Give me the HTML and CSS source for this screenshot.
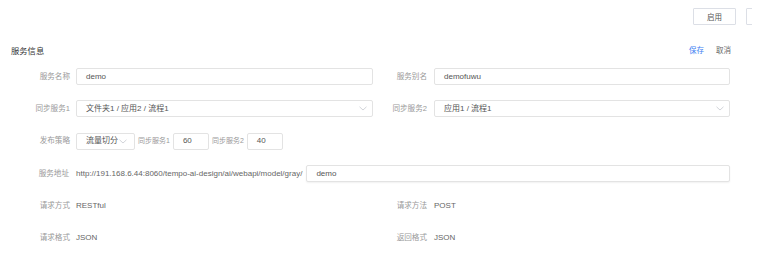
FILE: index.html
```html
<!DOCTYPE html>
<html lang="zh">
<head>
<meta charset="utf-8">
<link rel="stylesheet" href="styles.css">
</head>
<body>
<div class="page">
  <div class="topbar">
    <div class="toolbar">
      <button class="btn">启用</button>
      <button class="btn btn-clipped" aria-label="停用"></button>
    </div>
  </div>
  <div class="section-head">
    <span class="title">服务信息</span>
    <div class="actions">
      <span class="link primary">保存</span>
      <span class="link">取消</span>
    </div>
  </div>
  <div class="form">
    <div class="label">服务名称</div>
    <div class="input">demo</div>
    <div class="label">服务别名</div>
    <div class="input">demofuwu</div>

    <div class="label">同步服务1</div>
    <div class="input select"><span>文件夹1 / 应用2 / 流程1</span><svg class="chev" viewBox="0 0 8 5"><path d="M0.5 0.8 L4 4 L7.5 0.8"/></svg></div>
    <div class="label">同步服务2</div>
    <div class="input select"><span>应用1 / 流程1</span><svg class="chev" viewBox="0 0 8 5"><path d="M0.5 0.8 L4 4 L7.5 0.8"/></svg></div>

    <div class="label">发布策略</div>
    <div class="inline span3">
      <div class="input select small"><span>流量切分</span><svg class="chev" viewBox="0 0 8 5"><path d="M0.5 0.8 L4 4 L7.5 0.8"/></svg></div>
      <span class="sublabel">同步服务1</span>
      <div class="input num">60</div>
      <span class="sublabel">同步服务2</span>
      <div class="input num">40</div>
    </div>

    <div class="label">服务地址</div>
    <div class="inline url span3">
      <span class="url-text">http://191.168.6.44:8060/tempo-ai-design/ai/webapi/model/gray/</span>
      <div class="input grow">demo</div>
    </div>

    <div class="label">请求方式</div>
    <div class="value">RESTful</div>
    <div class="label">请求方法</div>
    <div class="value">POST</div>

    <div class="label">请求格式</div>
    <div class="value">JSON</div>
    <div class="label">返回格式</div>
    <div class="value">JSON</div>
  </div>
</div>
</body>
</html>
```

FILE: styles.css
```css
html, body {
  margin: 0;
  padding: 0;
  background: #ffffff;
}
body {
  font-family: "Liberation Sans", "Noto Sans CJK SC", sans-serif;
  font-size: 8px;
  line-height: 12px;
  color: #555555;
}
.page {
  width: 771px;
}
.topbar {
  width: 752px;
  overflow: hidden;
  padding-top: 8px;
}
.toolbar {
  display: flex;
  justify-content: flex-end;
  gap: 10px;
  width: 789px;
}
.btn {
  width: 43px;
  height: 17px;
  padding: 0;
  margin: 0;
  background: #fff;
  border: 1px solid #dcdfe6;
  border-radius: 1px;
  font-family: inherit;
  font-size: 7.5px;
  color: #555;
  box-sizing: border-box;
}
.section-head {
  display: flex;
  justify-content: space-between;
  align-items: center;
  width: 731px;
  box-sizing: border-box;
  padding-left: 11px;
  margin-top: 20px;
  height: 12px;
}
.title {
  font-size: 8.3px;
  color: #333333;
}
.actions {
  display: flex;
  gap: 12px;
  font-size: 7.5px;
}
.link {
  color: #666;
}
.link.primary {
  color: #3d7ff2;
}
.form {
  display: grid;
  grid-template-columns: 76px 297px 61px 296px;
  grid-auto-rows: 17px;
  row-gap: 15.4px;
  margin-top: 11px;
}
.label {
  display: flex;
  align-items: center;
  justify-content: flex-end;
  color: #999999;
  font-size: 7.6px;
  white-space: nowrap;
}
.form > .label:nth-child(4n+1) {
  padding-right: 6px;
}
.form > .label:nth-child(4n+3) {
  padding-right: 7px;
}
.input {
  display: flex;
  align-items: center;
  height: 17px;
  box-sizing: border-box;
  border: 1px solid #e3e3e3;
  border-radius: 2px;
  padding: 0 9px;
  color: #555;
  background: #fff;
  white-space: nowrap;
}
.select {
  justify-content: space-between;
  padding-right: 5px;
}
.chev {
  width: 8px;
  height: 5px;
  fill: none;
  stroke: #c6c9cf;
  stroke-width: 0.8;
}
.inline {
  display: flex;
  align-items: center;
}
.span3 {
  grid-column: 2 / span 3;
}
.select.small {
  width: 59px;
  padding-right: 7px;
}
.sublabel {
  color: #999999;
  font-size: 7px;
  margin: 0 3px;
  white-space: nowrap;
}
.num {
  width: 36px;
}
.url-text {
  color: #666;
  white-space: nowrap;
  margin-right: 4px;
}
.grow {
  flex: 1;
  box-shadow: 0 1px 2px rgba(0,0,0,0.06);
}
.value {
  display: flex;
  align-items: center;
  color: #666;
}
```
